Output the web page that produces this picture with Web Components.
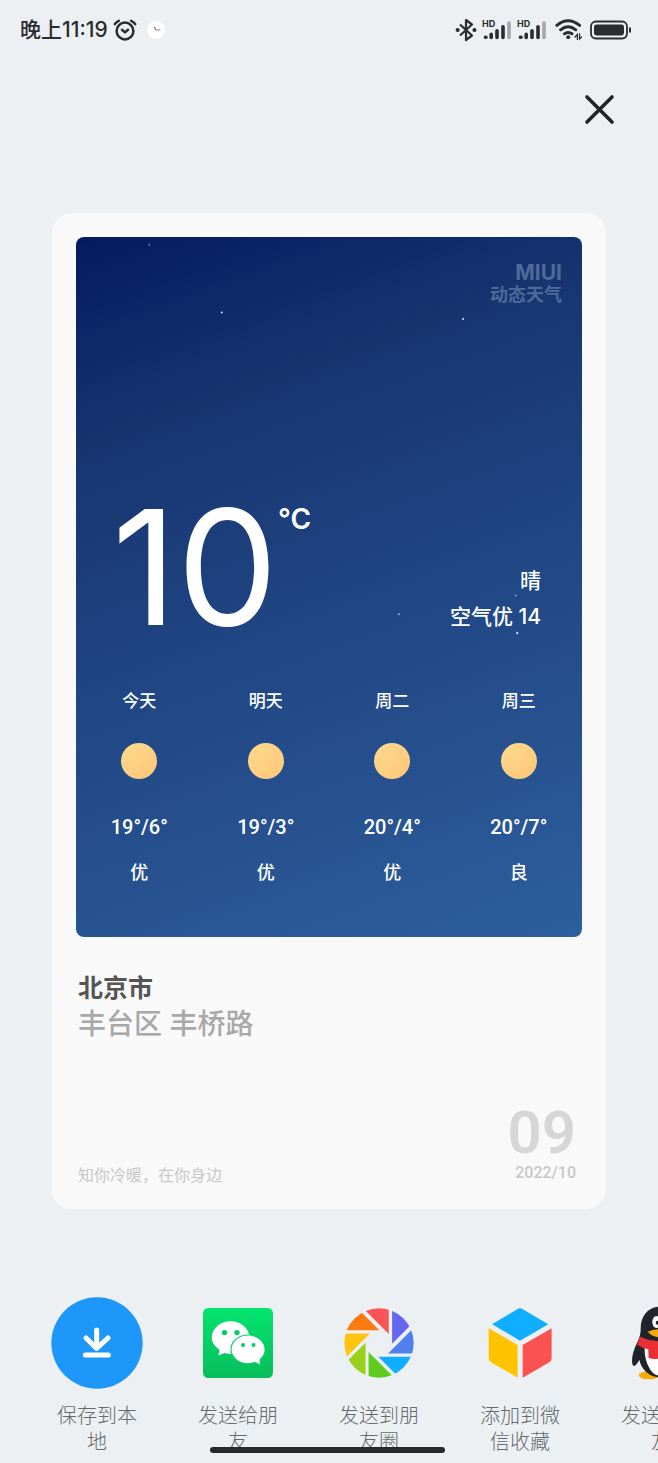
<!DOCTYPE html>
<html lang="zh-CN">
<head>
<meta charset="utf-8">
<meta name="viewport" content="width=device-width, initial-scale=1">
<title>动态天气</title>
<style>
	html { background: #ecf0f3 }
	body {
		margin: 0;
		font-family: Inter, "Noto Sans CJK SC", sans-serif;
		color: #2a2c2f;
	}
</style>
</head>
<body>
<weather-share>
	<status-bar slot="status" time="晚上11:19"></status-bar>
	<share-card slot="card" city="北京市" street="丰台区 丰桥路" slogan="知你冷暖，在你身边" day="09" month="2022/10">
		<weather-panel temp="10" sky="晴" air="空气优 14">
			<day-forecast day="今天" range="19°/6°" air="优"></day-forecast>
			<day-forecast day="明天" range="19°/3°" air="优"></day-forecast>
			<day-forecast day="周二" range="20°/4°" air="优"></day-forecast>
			<day-forecast day="周三" range="20°/7°" air="良"></day-forecast>
		</weather-panel>
	</share-card>
	<share-target slot="target" icon="save">保存到本地</share-target>
	<share-target slot="target" icon="wechat">发送给朋友</share-target>
	<share-target slot="target" icon="moments">发送到朋友圈</share-target>
	<share-target slot="target" icon="favorites">添加到微信收藏</share-target>
	<share-target slot="target" icon="qq">发送给好友</share-target>
</weather-share>

<script>
	const define = (name, render) => {
		!customElements.get(name) &&
			customElements.define(
				name,
				class extends HTMLElement {
					constructor() {
						super()
						this.attachShadow({ mode: 'open' })
					}

					connectedCallback() {
						this.shadowRoot.innerHTML = render((attr) => this.getAttribute(attr) || '')
					}
				}
			)
	}

	const signal = /* html */ `
		<svg width="30" height="26" viewBox="0 -2 30 26" aria-hidden="true">
			<text x="0" y="8" font-size="9" font-weight="700" fill="#2a2c2f">HD</text>
			<g stroke="#2a2c2f" stroke-width="3.6" stroke-linecap="round">
				<path d="M3.4 18.2h.6M9.2 15.4v3M15 11.8v6.6M21 7.8v10.6" />
			</g>
			<path d="M27 4v14.4" stroke="#a3a6aa" stroke-width="3.6" stroke-linecap="round" />
		</svg>
	`

	define('status-bar', (attr) => /* html */ `
		<style>
			:host {
				display: flex;
				align-items: center;
				justify-content: space-between;
				height: 60px;
				padding: 0 26px 0 20px;
			}
			div { display: flex; align-items: center; gap: 5px }
			time { font-size: 21px; font-weight: 500; line-height: 28px }
			svg { display: block; flex: none }
			.notice { margin-left: 4px }
			.wifi { margin: 0 3px }
		</style>
		<div>
			<time>${attr('time')}</time>
			<svg width="24" height="22" viewBox="0 0 24 22" fill="none" stroke="#2a2c2f" stroke-width="2.5" stroke-linecap="round" stroke-linejoin="round" aria-hidden="true">
				<circle cx="12" cy="12" r="8.4" />
				<path d="M1.8 5.2Q3 3 5.8 1.8M22.2 5.2Q21 3 18.2 1.8M9 10.8l3 2.6 3-2.6" />
			</svg>
			<svg class="notice" width="20" height="20" viewBox="0 0 20 20" fill="none" aria-hidden="true">
				<circle cx="10" cy="10" r="9" fill="#fff" />
				<path d="M8.4 6.8l1.2 3" stroke="#555" />
				<path d="M9.6 9.9h4.8" stroke="#a77878" />
			</svg>
		</div>
		<div>
			<svg width="22" height="24" viewBox="0 0 22 24" fill="none" stroke="#2a2c2f" stroke-width="2.2" stroke-linejoin="round" aria-hidden="true">
				<path d="M5 6.5l12 11-6 4.5V2l6 4.5-12 11" />
				<path d="M2.6 12h.1M19.4 12h.1" stroke-width="4" stroke-linecap="round" />
			</svg>
			${signal}
			${signal}
			<svg class="wifi" width="27" height="22" viewBox="0 0 27 22" fill="none" stroke="#2a2c2f" stroke-width="2.9" stroke-linecap="round" aria-hidden="true">
				<path d="M1.8 6.4Q13 -2.8 24.6 6.4M5.6 10.8Q13 4.6 20.8 10.8M9.4 14.8Q13 12 17 14.8" />
				<path d="M13.2 18.2h.1" stroke-width="3.8" />
				<path d="M22.4 20.4v-5l-2.4 2.6M24.6 15v5l2-2" stroke-width="1.3" />
			</svg>
			<svg width="42" height="20" viewBox="0 0 42 20" aria-hidden="true">
				<rect x="1" y="1.5" width="36" height="17" rx="5" fill="none" stroke="#2a2c2f" stroke-width="1.8" />
				<rect x="4" y="4.5" width="30" height="11" rx="2.4" fill="#2a2c2f" />
				<path d="M40 7.6v4.8" stroke="#2a2c2f" stroke-width="2" />
			</svg>
		</div>
	`)

	define('day-forecast', (attr) => /* html */ `
		<style>
			:host {
				display: flex;
				flex-direction: column;
				align-items: center;
				font-size: 17px;
				font-weight: 500;
				line-height: 24px;
			}
			.sun {
				width: 36px;
				height: 36px;
				margin: 30px 0 36px;
				border-radius: 50%;
				background: linear-gradient(135deg, #ffda8e, #fdc678);
			}
			.range { margin-bottom: 22px; font-family: Roboto, sans-serif; font-size: 20px }
			.air { font-size: 18px }
		</style>
		<span>${attr('day')}</span>
		<span class="sun"></span>
		<span class="range">${attr('range')}</span>
		<span class="air">${attr('air')}</span>
	`)

	define('weather-panel', (attr) => /* html */ `
		<style>
			:host {
				display: block;
				position: relative;
				padding: 25px 0 52px;
				border-radius: 8px;
				overflow: hidden;
				background: linear-gradient(160deg, #041b60, #17346f 24%, #1f4482 50%, #27528f 76%, #2c5f9f);
				color: #fff;
			}
			.stars { position: absolute; inset: 0; width: 100%; height: 100% }
			.brand {
				margin-right: 20px;
				color: #50699b;
				font-size: 18px;
				font-weight: 600;
				line-height: 22px;
				text-align: right;
			}
			.brand span { display: block }
			.brand .name { font-size: 21px; font-weight: 700 }
			.now {
				display: flex;
				align-items: flex-start;
				margin: 201px 41px 54px 36px;
			}
			.temp { font-size: 160px; font-weight: 400; line-height: 120px }
			.unit { font-size: 28px; font-weight: 600; line-height: 24px }
			.sky {
				flex: 1;
				align-self: flex-end;
				padding-top: 56px;
				font-size: 21px;
				font-weight: 500;
				line-height: 36px;
				text-align: right;
			}
			.sky span { display: block }
			.days { display: grid; grid-template-columns: repeat(4, 1fr) }
		</style>
		<svg class="stars" fill="#dbe6ff" aria-hidden="true">
			<circle cx="14.5%" cy="1.1%" r="1" opacity=".5" />
			<circle cx="28.8%" cy="10.8%" r="1" />
			<circle cx="76.5%" cy="11.7%" r="1" />
			<circle cx="63.8%" cy="53.9%" r="1" opacity=".7" />
			<circle cx="86.9%" cy="51.2%" r="1" opacity=".6" />
			<circle cx="87.2%" cy="56.6%" r="1.1" />
		</svg>
		<div class="brand"><span class="name">MIUI</span><span>动态天气</span></div>
		<div class="now">
			<span class="temp">${attr('temp')}</span>
			<span class="unit">°C</span>
			<div class="sky"><span>${attr('sky')}</span><span>${attr('air')}</span></div>
		</div>
		<div class="days"><slot></slot></div>
	`)

	define('share-card', (attr) => /* html */ `
		<style>
			:host {
				display: block;
				padding: 24px 24px 26px;
				border-radius: 20px;
				background: #f9f9f9;
			}
			.place { margin: 33px 2px 0; line-height: 36px }
			.place span { display: block; font-size: 28px; font-weight: 500; color: #a8a8a8 }
			h1 { margin: 0; font-size: 25px; font-weight: 700; color: #555; line-height: 36px }
			footer {
				display: flex;
				align-items: flex-end;
				justify-content: space-between;
				margin: 61px 6px 0 2px;
				color: #c8c8c8;
			}
			p { margin: 0; font-size: 16px; line-height: 16px }
			time { font: 500 16px/20px Roboto, sans-serif; text-align: right }
			time b { display: block; font-size: 60px; font-weight: 600; line-height: 60px; color: #d6d6d6 }
		</style>
		<slot></slot>
		<div class="place"><h1>${attr('city')}</h1><span>${attr('street')}</span></div>
		<footer>
			<p>${attr('slogan')}</p>
			<time><b>${attr('day')}</b>${attr('month')}</time>
		</footer>
	`)

	const icons = {
		save: /* html */ `
			<svg width="92" height="92" viewBox="64 50 276 276">
				<circle cx="202" cy="188" r="137" fill="#1d98fa" />
				<path d="M201 149v54M169 173l32 31 34-31M167 224h69" fill="none" stroke="#fff" stroke-width="15" stroke-linecap="round" stroke-linejoin="round" />
			</svg>
		`,
		wechat: /* html */ `
			<svg width="70" height="70" viewBox="521 84 208 208">
				<linearGradient id="g" x2="0" y2="1"><stop stop-color="#03e46f" /><stop offset="1" stop-color="#08bd5b" /></linearGradient>
				<rect x="521" y="84" width="208" height="208" rx="16" fill="url(#g)" />
				<path d="M603 123c31 0 56 22 56 49s-25 49-56 49q-9 0-18-3l-18 7 3-17c-15-10-23-22-23-36 0-27 25-49 56-49z" fill="#fff" />
				<path d="M655 166c27 0 49 19 49 41q0 17-15 30l1 14-15-7q-10 4-20 4c-27 0-49-19-49-41s22-41 49-41z" fill="#fff" stroke="#07cf64" stroke-width="7" paint-order="stroke" />
				<g fill="#07cc63"><circle cx="585" cy="157" r="8" /><circle cx="622" cy="157" r="8" /><circle cx="640" cy="194" r="6" /><circle cx="671" cy="194" r="6" /></g>
			</svg>
		`,
		moments: /* html */ `
			<svg width="70" height="70" viewBox="136 83 208 208">
				<clipPath id="c"><circle cx="240" cy="187" r="103" /></clipPath>
				<g clip-path="url(#c)">
					<path d="M179 70l90 90V70z" fill="#fa5457" />
					<path d="M279 70v119l75-75z" fill="#6366ee" />
					<path d="M267 218l90-90v90z" fill="#5080ec" />
					<path d="M238 228h112v112z" fill="#10aeff" />
					<path d="M209 214v90h90z" fill="#5fcc1c" />
					<path d="M200 186v120l-90-30z" fill="#9ad01c" />
					<path d="M213 159h-93v93z" fill="#fdc511" />
					<path d="M241 149H130V38z" fill="#fb7a12" />
				</g>
			</svg>
		`,
		favorites: /* html */ `
			<svg width="70" height="70" viewBox="559 83 208 208">
				<path d="M580 131l76-45q7-4 14 0l77 45-84 49z" fill="#10aeff" />
				<path d="M570 143l86 50v97l-78-45q-8-4-8-13z" fill="#ffc300" />
				<path d="M757 143l-86 50v97l78-45q8-4 8-13z" fill="#fa5151" />
			</svg>
		`,
		qq: /* html */ `
			<svg width="70" height="74" viewBox="198 78 210 222">
				<ellipse cx="267" cy="286" rx="31" ry="12" fill="#faab07" />
				<ellipse cx="339" cy="286" rx="31" ry="12" fill="#faab07" />
				<path d="M303 80c-38 0-61 27-61 66 0 18-4 28-10 41-11 22-20 50-14 68 5 8 14-4 20-16 5 27 28 53 65 53s60-26 65-53c6 12 15 24 20 16 6-18-3-46-14-68-6-13-10-23-10-41 0-39-23-66-61-66z" fill="#202329" />
				<path d="M254 195q-2 40 12 65 12 27 37 28 25-1 37-28 14-25 12-65-49 26-98 0z" fill="#fff" />
				<ellipse cx="289" cy="126" rx="12" ry="18" fill="#fff" />
				<ellipse cx="317" cy="126" rx="12" ry="18" fill="#fff" />
				<circle cx="293" cy="128" r="6" fill="#202329" />
				<circle cx="313" cy="128" r="6" fill="#202329" />
				<path d="M263 155q40-15 80 0-15 17-40 17t-40-17z" fill="#faab07" />
				<path d="M240 170q63 28 126 0l8 24q-32 19-80 20v22q-14 2-28-2l-1-26q-19-4-33-14z" fill="#eb2f35" />
			</svg>
		`,
	}

	define('share-target', (attr) => /* html */ `
		<style>
			:host { display: block; flex: none; width: 92px }
			button {
				display: block;
				width: 100%;
				padding: 0;
				border: 0;
				background: none;
				color: #66696d;
				font: 300 20px/26px "Noto Sans CJK SC", sans-serif;
				text-align: center;
				cursor: pointer;
			}
			.icon {
				display: flex;
				align-items: center;
				justify-content: center;
				height: 92px;
				margin-bottom: 13px;
			}
			.label { display: block; padding: 0 6px }
		</style>
		<button type="button">
			<span class="icon" aria-hidden="true">${icons[attr('icon')]}</span>
			<span class="label"><slot></slot></span>
		</button>
	`)

	define('weather-share', () => /* html */ `
		<style>
			:host {
				display: flex;
				flex-direction: column;
				position: relative;
				min-height: 100vh;
				overflow: hidden;
			}
			.close {
				align-self: flex-end;
				margin: 29px 38px 0 0;
				padding: 0;
				border: 0;
				background: none;
				cursor: pointer;
			}
			.close svg { display: block }
			main { margin: 83px 52px 0 }
			nav { display: flex; gap: 49px; margin-top: 88px; padding-left: 51px; overflow: hidden }
			/* system gesture bar, over the page */
			.home {
				position: absolute;
				left: 50%;
				bottom: 10px;
				width: 235px;
				height: 6px;
				margin-left: -119px;
				border-radius: 3px;
				background: #262829;
			}
		</style>
		<slot name="status"></slot>
		<button class="close" type="button" aria-label="关闭">
			<svg width="41" height="41" viewBox="0 0 41 41" stroke="#222426" stroke-width="3.6" stroke-linecap="round"><path d="M8 8l25 25M33 8L8 33" /></svg>
		</button>
		<main><slot name="card"></slot></main>
		<nav><slot name="target"></slot></nav>
		<div class="home"></div>
	`)
</script>
</body>
</html>
